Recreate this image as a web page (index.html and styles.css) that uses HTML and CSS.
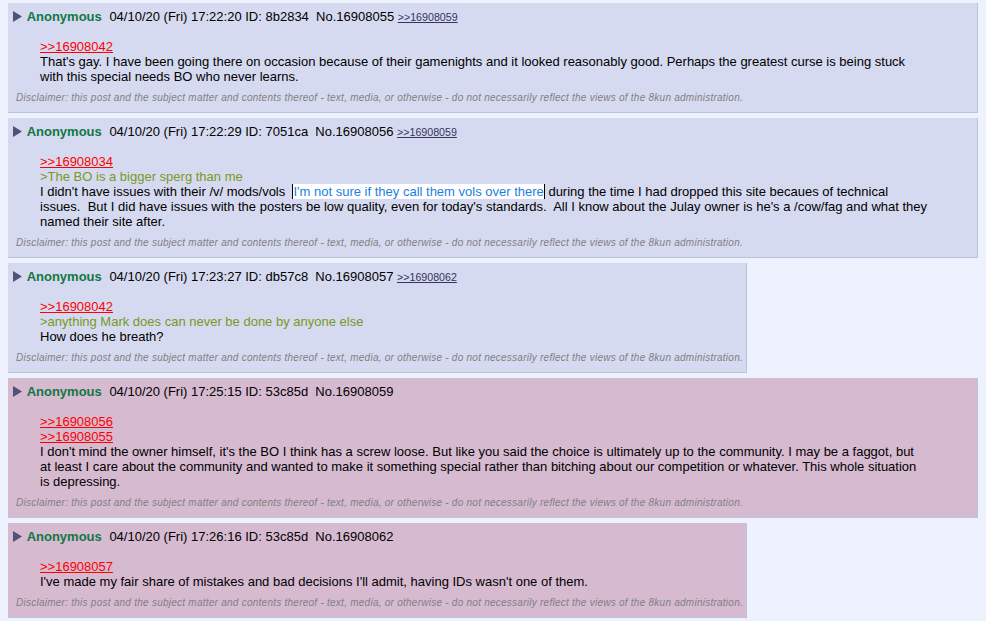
FILE: index.html
```html
<!DOCTYPE html>
<html lang="en">
<head>
    <meta charset="UTF-8">
    <link rel="stylesheet" href="styles.css">
</head>
<body>
    <div class="thread">

        <div class="post-wrap">
            <div class="post reply">
                <p class="intro">
                    <svg class="arrow" width="9" height="11" viewBox="0 0 9 11"><polygon points="0,0 9,5.5 0,11" /></svg>
                    <span class="name">Anonymous</span>
                    <time>04/10/20 (Fri) 17:22:20</time> ID: 8b2834&nbsp; No.16908055
                    <a href="#p16908059" class="mentioned">&gt;&gt;16908059</a>
                </p>
                <div class="body">
                    <a href="#p16908042" class="quote-link">&gt;&gt;16908042</a><br>
                    That's gay. I have been going there on occasion because of their gamenights and it looked reasonably good. Perhaps the greatest curse is being stuck with this special needs BO who never learns.
                </div>
                <p class="disclaimer">Disclaimer: this post and the subject matter and contents thereof - text, media, or otherwise - do not necessarily reflect the views of the 8kun administration.</p>
            </div>
        </div>

        <div class="post-wrap">
            <div class="post reply">
                <p class="intro">
                    <svg class="arrow" width="9" height="11" viewBox="0 0 9 11"><polygon points="0,0 9,5.5 0,11" /></svg>
                    <span class="name">Anonymous</span>
                    <time>04/10/20 (Fri) 17:22:29</time> ID: 7051ca&nbsp; No.16908056
                    <a href="#p16908059" class="mentioned">&gt;&gt;16908059</a>
                </p>
                <div class="body">
                    <a href="#p16908034" class="quote-link">&gt;&gt;16908034</a><br>
                    <span class="quote">&gt;The BO is a bigger sperg than me</span><br>
                    I didn't have issues with their /v/ mods/vols&nbsp; <span class="heading">I'm not sure if they call them vols over there</span> during the time I had dropped this site becaues of technical issues.&nbsp; But I did have issues with the posters be low quality, even for today's standards.&nbsp; All I know about the Julay owner is he's a /cow/fag and what they named their site after.
                </div>
                <p class="disclaimer">Disclaimer: this post and the subject matter and contents thereof - text, media, or otherwise - do not necessarily reflect the views of the 8kun administration.</p>
            </div>
        </div>

        <div class="post-wrap">
            <div class="post reply">
                <p class="intro">
                    <svg class="arrow" width="9" height="11" viewBox="0 0 9 11"><polygon points="0,0 9,5.5 0,11" /></svg>
                    <span class="name">Anonymous</span>
                    <time>04/10/20 (Fri) 17:23:27</time> ID: db57c8&nbsp; No.16908057
                    <a href="#p16908062" class="mentioned">&gt;&gt;16908062</a>
                </p>
                <div class="body">
                    <a href="#p16908042" class="quote-link">&gt;&gt;16908042</a><br>
                    <span class="quote">&gt;anything Mark does can never be done by anyone else</span><br>
                    How does he breath?
                </div>
                <p class="disclaimer">Disclaimer: this post and the subject matter and contents thereof - text, media, or otherwise - do not necessarily reflect the views of the 8kun administration.</p>
            </div>
        </div>

        <div class="post-wrap">
            <div class="post reply you full">
                <p class="intro">
                    <svg class="arrow" width="9" height="11" viewBox="0 0 9 11"><polygon points="0,0 9,5.5 0,11" /></svg>
                    <span class="name">Anonymous</span>
                    <time>04/10/20 (Fri) 17:25:15</time> ID: 53c85d&nbsp; No.16908059
                </p>
                <div class="body">
                    <a href="#p16908056" class="quote-link">&gt;&gt;16908056</a><br>
                    <a href="#p16908055" class="quote-link">&gt;&gt;16908055</a><br>
                    I don't mind the owner himself, it's the BO I think has a screw loose. But like you said the choice is ultimately up to the community. I may be a faggot, but<br>
                    at least I care about the community and wanted to make it something special rather than bitching about our competition or whatever. This whole situation<br>
                    is depressing.
                </div>
                <p class="disclaimer">Disclaimer: this post and the subject matter and contents thereof - text, media, or otherwise - do not necessarily reflect the views of the 8kun administration.</p>
            </div>
        </div>

        <div class="post-wrap">
            <div class="post reply you">
                <p class="intro">
                    <svg class="arrow" width="9" height="11" viewBox="0 0 9 11"><polygon points="0,0 9,5.5 0,11" /></svg>
                    <span class="name">Anonymous</span>
                    <time>04/10/20 (Fri) 17:26:16</time> ID: 53c85d&nbsp; No.16908062
                </p>
                <div class="body">
                    <a href="#p16908057" class="quote-link">&gt;&gt;16908057</a><br>
                    I've made my fair share of mistakes and bad decisions I'll admit, having IDs wasn't one of them.
                </div>
                <p class="disclaimer">Disclaimer: this post and the subject matter and contents thereof - text, media, or otherwise - do not necessarily reflect the views of the 8kun administration.</p>
            </div>
        </div>

    </div>
</body>
</html>
```

FILE: styles.css
```css
body {
    font-family: 'Liberation Sans', Arial, sans-serif;
    font-size: 13px;
    background-color: #eef2ff;
    color: #000;
    margin: 0;
    padding: 3px 8px 0 8px;
}

.post-wrap {
    margin-bottom: 5px;
}

.post {
    display: inline-block;
    vertical-align: top;
    box-sizing: border-box;
    max-width: 100%;
    padding: 6px 3px 8px 5px;
}

.post.full {
    display: block;
}

.post.reply {
    background-color: #d6daf0;
    border: 1px solid #b7c5d9;
    border-left: none;
    border-top: none;
}

.post.you {
    background-color: #d6bad0;
}

.intro {
    margin: 0;
    line-height: 16px;
    white-space: nowrap;
}

.arrow {
    fill: #51517a;
    vertical-align: -1px;
    margin-right: 1px;
}

.name {
    color: #117743;
    font-weight: bold;
    margin-right: 4px;
}

.mentioned {
    color: #34345c;
    font-size: 8pt;
}

.body {
    margin: 14px 0 0 27px;
    padding-right: 44px;
    line-height: 15px;
}

.quote-link {
    color: #ff0000;
}

.quote {
    color: #789922;
}

.heading {
    background-color: #fff;
    color: #1b7fe0;
    border-left: 1px solid #000;
    border-right: 1px solid #000;
}

.disclaimer {
    margin: 7px 0 0 3px;
    font-size: 10px;
    letter-spacing: 0.25px;
    line-height: 13px;
    font-style: italic;
    color: #808080;
    white-space: nowrap;
}
```
